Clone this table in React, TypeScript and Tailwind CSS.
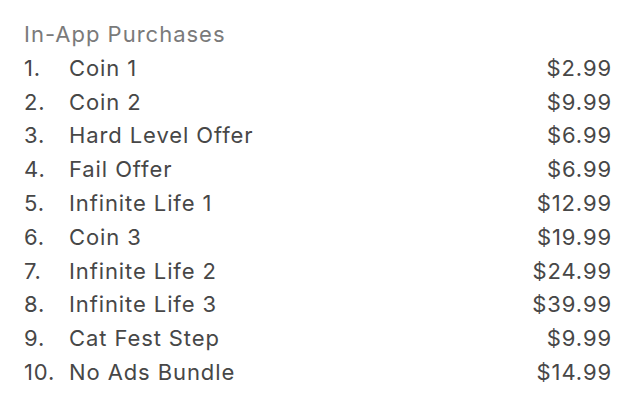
import React from "react";

const items: [string, string][] = [
  ["Coin 1", "$2.99"],
  ["Coin 2", "$9.99"],
  ["Hard Level Offer", "$6.99"],
  ["Fail Offer", "$6.99"],
  ["Infinite Life 1", "$12.99"],
  ["Coin 3", "$19.99"],
  ["Infinite Life 2", "$24.99"],
  ["Infinite Life 3", "$39.99"],
  ["Cat Fest Step", "$9.99"],
  ["No Ads Bundle", "$14.99"],
];

export default function App() {
  return (
    <div
      className="w-[640px] h-[405px] bg-white pl-[24px] pr-[29px] pt-[18px] text-[22px] leading-[33.8px] tracking-[0.9px] text-[#474747]"
      style={{ fontFamily: "Inter, 'Noto Sans', sans-serif" }}
    >
      <div className="text-[#7a7a7a] tracking-[1px]">In-App Purchases</div>
      {items.map(([name, price], i) => (
        <div key={i} className="flex">
          <span className="w-[45px]">{i + 1}.</span>
          <span className="flex-1">{name}</span>
          <span className="-mr-[1px]">{price}</span>
        </div>
      ))}
    </div>
  );
}
